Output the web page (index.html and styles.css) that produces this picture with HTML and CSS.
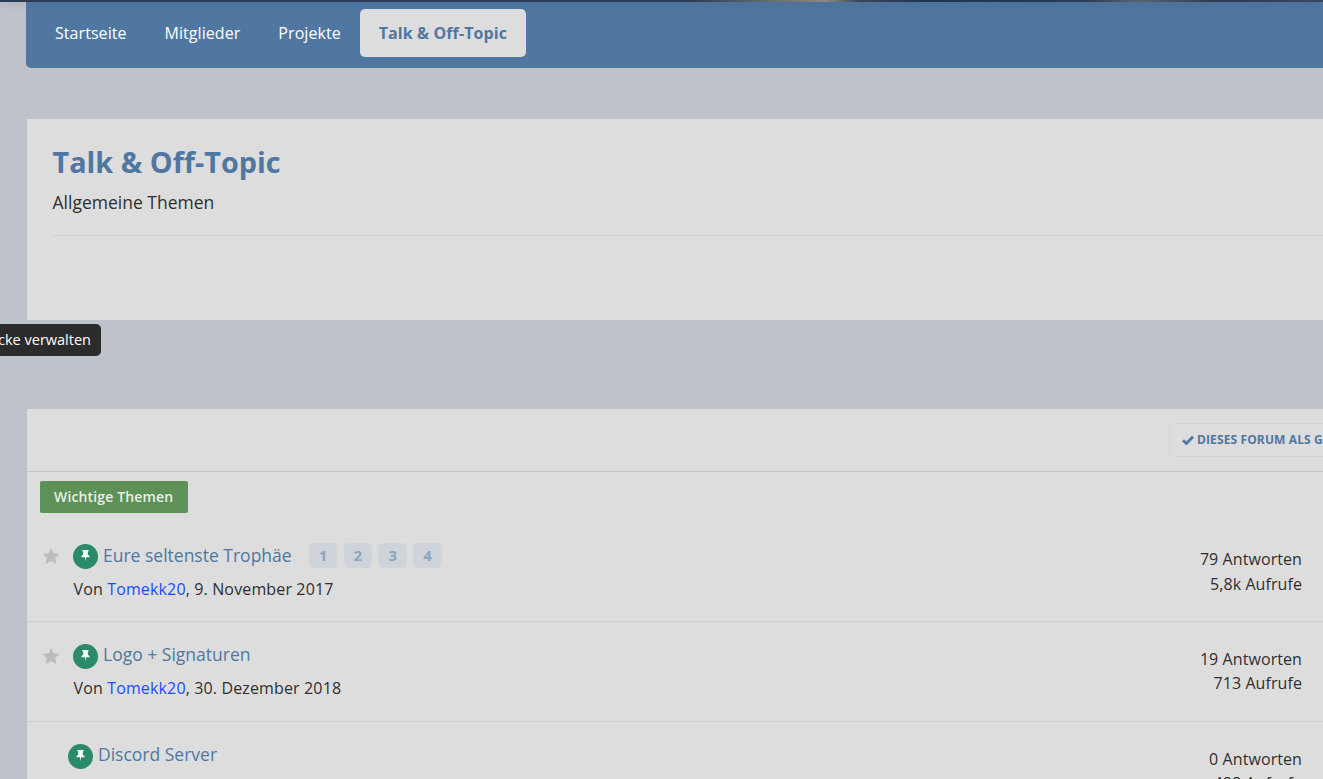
FILE: index.html
```html
<!DOCTYPE html>
<html lang="de">
<head>
<meta charset="utf-8">
<title>Talk &amp; Off-Topic</title>
<link rel="stylesheet" href="styles.css">
</head>
<body>
<div class="page">
  <nav class="nav">
    <a class="nav-item">Startseite</a>
    <a class="nav-item">Mitglieder</a>
    <a class="nav-item">Projekte</a>
    <a class="nav-item nav-active">Talk &amp; Off-Topic</a>
  </nav>
  <section class="header-card">
    <h1 class="title">Talk &amp; Off-Topic</h1>
    <p class="subtitle">Allgemeine Themen</p>
    <div class="rule"></div>
  </section>
  <div class="tooltip">Blöcke verwalten</div>
  <section class="list-card">
    <div class="toolbar">
      <a class="mark-read"><svg class="check" viewBox="0 0 12 10"><path d="M1 5.2 4.4 8.5 11 1.8" fill="none" stroke="currentColor" stroke-width="2.8"/></svg>DIESES FORUM ALS GELESEN MARKIEREN</a>
    </div>
    <div class="tag-row"><span class="tag">Wichtige Themen</span></div>
    <article class="topic topic-first">
      <svg class="star" viewBox="0 0 18 18"><path d="M9 .8l2.5 5.5 6 .7-4.4 4.1 1.2 5.9L9 14.1 3.7 17l1.2-5.9L.5 7l6-.7z"/></svg>
      <div class="topic-main">
        <div class="topic-line">
          <span class="pin"><svg viewBox="0 0 12 14"><path d="M2.6 1h6.8v1.2L8.5 3v3.2c1.2.6 2 1.5 2 2.8H6.6L6 13.5 5.4 9H1.5c0-1.3.8-2.2 2-2.8V3l-.9-.8z" fill="#fff"/></svg></span>
          <a class="topic-title">Eure seltenste Trophäe</a>
          <span class="pages"><span class="page-no">1</span><span class="page-no">2</span><span class="page-no">3</span><span class="page-no">4</span></span>
        </div>
        <div class="byline">Von <a class="author">Tomekk20</a>, 9. November 2017</div>
      </div>
      <div class="stats"><div>79 Antworten</div><div>5,8k Aufrufe</div></div>
    </article>
    <article class="topic">
      <svg class="star" viewBox="0 0 18 18"><path d="M9 .8l2.5 5.5 6 .7-4.4 4.1 1.2 5.9L9 14.1 3.7 17l1.2-5.9L.5 7l6-.7z"/></svg>
      <div class="topic-main">
        <div class="topic-line">
          <span class="pin"><svg viewBox="0 0 12 14"><path d="M2.6 1h6.8v1.2L8.5 3v3.2c1.2.6 2 1.5 2 2.8H6.6L6 13.5 5.4 9H1.5c0-1.3.8-2.2 2-2.8V3l-.9-.8z" fill="#fff"/></svg></span>
          <a class="topic-title">Logo + Signaturen</a>
        </div>
        <div class="byline">Von <a class="author">Tomekk20</a>, 30. Dezember 2018</div>
      </div>
      <div class="stats"><div>19 Antworten</div><div>713 Aufrufe</div></div>
    </article>
    <article class="topic topic-nostar">
      <div class="topic-main">
        <div class="topic-line">
          <span class="pin"><svg viewBox="0 0 12 14"><path d="M2.6 1h6.8v1.2L8.5 3v3.2c1.2.6 2 1.5 2 2.8H6.6L6 13.5 5.4 9H1.5c0-1.3.8-2.2 2-2.8V3l-.9-.8z" fill="#fff"/></svg></span>
          <a class="topic-title">Discord Server</a>
        </div>
        <div class="byline">Von <a class="author">Tomekk20</a>, 2. Januar 2019</div>
      </div>
      <div class="stats"><div>0 Antworten</div><div>488 Aufrufe</div></div>
    </article>
  </section>
</div>
</body>
</html>
```
FILE: styles.css
```css
html, body {
  margin: 0;
  height: 100%;
  overflow: hidden;
}
body {
  background: #bdc2cb;
  font-family: "Open Sans", "Noto Sans", sans-serif;
  font-size: 16px;
  color: #2f2f2f;
}
body::before {
  content: "";
  display: block;
  position: relative;
  z-index: 1;
  height: 2px;
  background: linear-gradient(90deg, #2a3c55 0, #2a3c55 52%, #5b636c 57%, #8a8a85 62.4%, #3a4758 65%, #1f3350 70%, #2a3c55 82%, #5a6470 86%, #2a3a50 92%, #3a4a60 100%);
  box-shadow: 0 2px 7px rgba(30, 40, 60, .22);
}
.page {
  position: relative;
  margin-left: 26px;
  width: 1400px;
}
.nav {
  display: flex;
  align-items: center;
  height: 66px;
  box-sizing: border-box;
  padding: 0 0 5px 10px;
  background: #5077a1;
  border-radius: 0 0 0 5px;
}
.nav-item {
  padding: 0 19px;
  height: 48px;
  line-height: 49px;
  font-size: 16px;
  letter-spacing: .06px;
  color: #fff;
  border-radius: 5px;
}
.nav-active {
  background: #dddddd;
  color: #5077a1;
  font-weight: 700;
  letter-spacing: .1px;
}
.header-card {
  margin: 51px 0 0 1px;
  height: 201px;
  box-sizing: border-box;
  padding: 24px 0 0 25.5px;
  background: #dddddd;
}
.title {
  margin: 0;
  font-size: 28.8px;
  line-height: 38px;
  font-weight: 700;
  color: #5077a1;
}
.subtitle {
  margin: 9px 0 0;
  font-size: 17.5px;
  line-height: 25px;
}
.rule {
  margin-top: 20px;
  border-top: 1px solid #cfcfcf;
}
.tooltip {
  position: absolute;
  left: -52px;
  top: 322px;
  width: 127px;
  height: 32px;
  box-sizing: border-box;
  padding-right: 10px;
  line-height: 32px;
  text-align: right;
  font-size: 14.5px;
  white-space: nowrap;
  color: #fff;
  background: #2b2b2b;
  border-radius: 5px;
}
.list-card {
  margin: 89px 0 0 1px;
  background: #dddddd;
}
.toolbar {
  display: flex;
  align-items: center;
  height: 62px;
  padding-left: 1142px;
  border-bottom: 1px solid #c6c6c6;
}
.mark-read {
  display: flex;
  align-items: center;
  height: 30px;
  padding: 0 12px 2px;
  border: 1px solid #d2d5da;
  border-radius: 5px;
  font-size: 12px;
  letter-spacing: .12px;
  font-weight: 700;
  white-space: nowrap;
  color: #5077a1;
}
.check {
  width: 12px;
  height: 10px;
  margin: 1px 3px 0 0;
}
.tag-row {
  display: flex;
  padding: 9px 0 0 13px;
}
.tag {
  height: 32px;
  box-sizing: border-box;
  padding: 0 15px 0 14px;
  line-height: 31px;
  font-size: 14px;
  letter-spacing: .15px;
  font-weight: 600;
  color: #e9f0e6;
  background: #5e9158;
  border-radius: 2px;
}
.topic {
  display: flex;
  height: 100px;
  box-sizing: border-box;
  padding: 21px 124px 0 15px;
  border-bottom: 1px solid #cdcdcd;
}
.topic-first {
  height: 109px;
  padding-top: 30px;
}
.star {
  width: 18px;
  height: 18px;
  margin: 4px 13px 0 0;
  fill: #bcbcbc;
  flex: none;
}
.topic-main {
  flex: 1;
  min-width: 0;
}
.topic-line {
  display: flex;
  align-items: center;
  height: 26px;
}
.pin {
  display: flex;
  align-items: center;
  justify-content: center;
  width: 25px;
  height: 25px;
  margin-right: 5px;
  border-radius: 50%;
  background: #2b8a68;
  flex: none;
}
.pin svg {
  width: 11px;
  height: 13px;
  margin-top: -2px;
}
.topic-title {
  font-size: 17.5px;
  line-height: 26px;
  margin-bottom: 5px;
  color: #5077a1;
}
.topic-first .topic-title {
  margin-bottom: 3px;
}
.pages {
  display: flex;
  gap: 6.2px;
  margin-left: 17px;
  margin-bottom: 2px;
}
.page-no {
  width: 28.7px;
  height: 25px;
  line-height: 25px;
  text-align: center;
  font-size: 15px;
  font-weight: 700;
  color: #8ba4c0;
  background: #cfd4db;
  border-radius: 5px;
}
.byline {
  margin: 8px 0 0 .5px;
  font-size: 16px;
  letter-spacing: .14px;
  line-height: 22px;
}
.topic-first .byline {
  margin-top: 9px;
}
.author {
  color: #1a4dff;
}
.stats {
  margin: 4px 0 0;
  text-align: right;
  font-size: 16px;
  letter-spacing: .08px;
  line-height: 24px;
  flex: none;
}
.topic-first .stats {
  line-height: 25px;
}
.topic-nostar {
  padding-left: 41px;
  border-bottom: 0;
}
```
